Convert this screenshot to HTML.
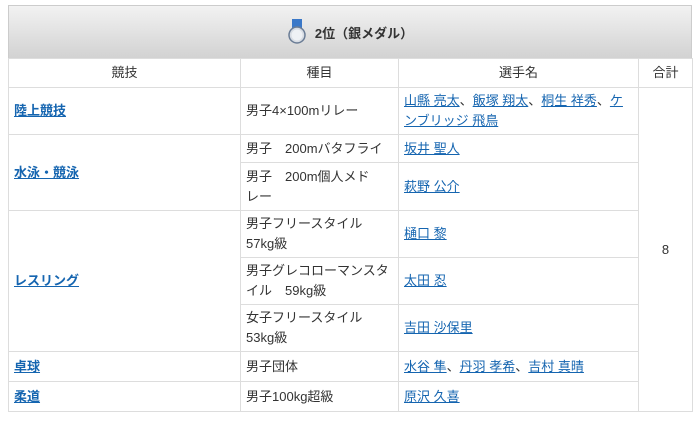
<!DOCTYPE html>
<html><head><meta charset="utf-8"><style>
body{margin:0;background:#fff;font-family:"Liberation Sans","Noto Sans CJK JP",sans-serif;font-size:13px;color:#333;}
.wrap{position:absolute;left:8px;top:5px;width:684px;}
.hd{height:53px;background:linear-gradient(#f2f2f2,#d2d2d2);border:1px solid #ccc;border-bottom:none;box-sizing:border-box;display:flex;align-items:center;justify-content:center;font-weight:bold;font-size:13px;color:#333;}
table{border-collapse:collapse;width:684px;table-layout:fixed;}
td,th{border:1px solid #ddd;padding:0 5px;line-height:20px;vertical-align:middle;text-align:left;}
th{font-weight:normal;text-align:center;height:28px;}
a{color:#1565b0;text-decoration:underline;}
td.s a{font-weight:bold;}
.nw{white-space:nowrap;}
</style></head><body>
<div class="wrap">
<div class="hd"><svg width="20" height="28" viewBox="0 0 20 28" style="margin-right:8px"><rect x="5" y="1" width="10" height="9" fill="#3a78c8"/><circle cx="10" cy="17" r="8" fill="#d8dde4" stroke="#6a7c95" stroke-width="1.5"/><circle cx="10" cy="17" r="5.5" fill="#eef1f5"/></svg>2位（銀メダル）</div>
<table>
<colgroup><col style="width:232px"><col style="width:158px"><col style="width:240px"><col style="width:54px"></colgroup>
<tr><th>競技</th><th>種目</th><th>選手名</th><th>合計</th></tr>
<tr style="height:47px"><td class="s"><a>陸上競技</a></td><td>男子4×100mリレー</td><td><span class="nw"><a>山縣 亮太</a>、<a>飯塚 翔太</a>、<a>桐生 祥秀</a>、<a>ケ</a></span><br><a>ンブリッジ 飛鳥</a></td><td rowspan="8" style="text-align:center">8</td></tr>
<tr style="height:28px"><td class="s" rowspan="2"><a>水泳・競泳</a></td><td class="nw">男子　200mバタフライ</td><td><a>坂井 聖人</a></td></tr>
<tr style="height:48px"><td>男子　200m個人メド<br>レー</td><td><a>萩野 公介</a></td></tr>
<tr style="height:47px"><td class="s" rowspan="3"><a>レスリング</a></td><td>男子フリースタイル<br>57kg級</td><td><a>樋口 黎</a></td></tr>
<tr style="height:47px"><td>男子グレコローマンスタ<br>イル　59kg級</td><td><a>太田 忍</a></td></tr>
<tr style="height:47px"><td>女子フリースタイル<br>53kg級</td><td><a>吉田 沙保里</a></td></tr>
<tr style="height:30px"><td class="s"><a>卓球</a></td><td>男子団体</td><td><a>水谷 隼</a>、<a>丹羽 孝希</a>、<a>吉村 真晴</a></td></tr>
<tr style="height:30px"><td class="s"><a>柔道</a></td><td>男子100kg超級</td><td><a>原沢 久喜</a></td></tr>
</table></div>
</body></html>
